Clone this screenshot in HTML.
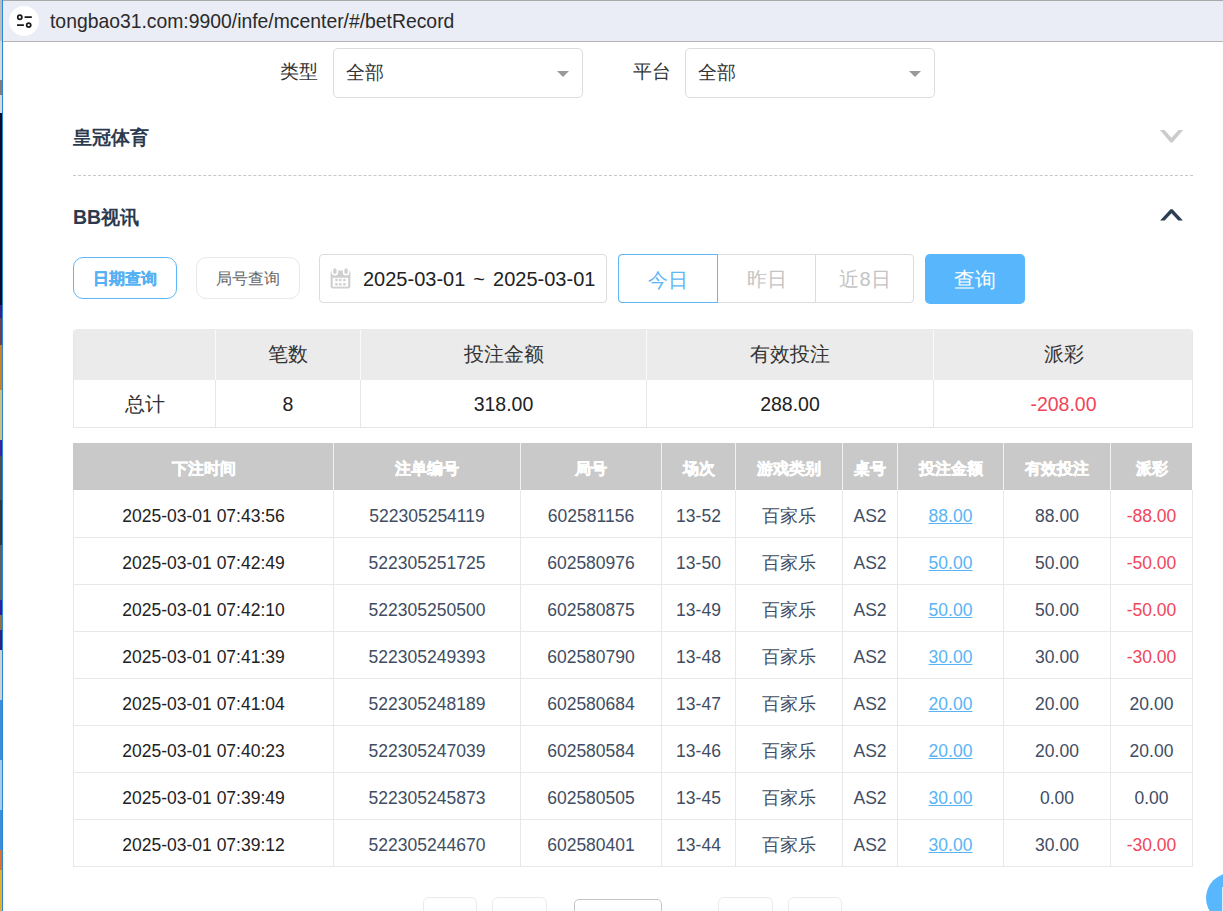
<!DOCTYPE html>
<html><head><meta charset="utf-8">
<style>
*{margin:0;padding:0;box-sizing:border-box}
html,body{width:1223px;height:911px;overflow:hidden;background:#fff}
body{position:relative;font-family:"Liberation Sans",sans-serif;color:#333}
.a{position:absolute}
.c{text-align:center}
/* left edge strip */
#strip{left:0;top:0;width:2px;height:911px;background:linear-gradient(#bdbdbd 0px,#bdbdbd 41px,#d9d9d9 41px,#d9d9d9 80px,#8a7a70 80px,#8a7a70 95px,#d9d9d9 95px,#d9d9d9 113px,#0d0d2a 113px,#0d0d2a 305px,#3a2080 305px,#3a2080 318px,#6a4050 318px,#6a4050 345px,#cf8025 345px,#cf8025 390px,#cfc07f 390px,#cfc07f 440px,#4020a0 440px,#4020a0 456px,#505050 456px,#505050 500px,#353535 500px,#353535 545px,#606060 545px,#606060 600px,#3020a0 600px,#3020a0 615px,#907040 615px,#907040 630px,#302080 630px,#302080 650px,#d0d0d0 650px,#d0d0d0 700px,#3a90d8 700px,#3a90d8 760px,#a8cce8 760px,#a8cce8 810px,#3a90d8 810px,#3a90d8 850px,#e07030 850px,#e07030 870px,#e8b030 870px,#e8b030 911px)}
#blueline{left:2px;top:0;width:1px;height:911px;background:#2b86d6}
/* address bar */
#bar{left:3px;top:0;width:1220px;height:42px;background:#eaedf6;border-top:1px solid #a9a9a9;border-bottom:1px solid #b4b4b4}
#tune{left:9px;top:6px;width:30px;height:30px;border-radius:50%;background:#fff}
#url{left:50px;top:9px;height:24px;line-height:24px;font-size:19.35px;color:#2a2a2a;white-space:nowrap}
.lbl{font-size:19px;color:#333;white-space:nowrap}
.sel{height:50px;width:250px;border:1px solid #dcdcdc;border-radius:5px;background:#fff}
.sel span{position:absolute;left:12px;top:0;line-height:48px;font-size:19px;color:#333}
.sel i{position:absolute;left:223px;top:22px;width:0;height:0;border-left:6px solid transparent;border-right:6px solid transparent;border-top:6px solid #999}
.ttl{font-size:19px;font-weight:bold;color:#2c3a4e;white-space:nowrap}
#dash{left:73px;top:175px;width:1120px;height:1px;border-top:1px dashed #c8c8c8}
.btn{height:42px;border-radius:10px;font-size:16px;text-align:center;line-height:42px}
#b1{left:73px;top:257px;width:104px;border:1px solid #5db6f6;color:#55b0f4;font-weight:bold;-webkit-text-stroke:0.3px #55b0f4}
#b2{left:196px;top:257px;width:104px;border:1px solid #e8e8e8;color:#666}
#date{left:319px;top:254px;width:288px;height:49px;border:1px solid #dcdcdc;border-radius:4px}
#date span{position:absolute;left:43px;top:1px;line-height:47px;font-size:20px;color:#222;white-space:nowrap}
#seg{left:618px;top:254px;width:296px;height:49px;border:1px solid #dcdcdc;border-radius:4px}
.sg{top:-1px;height:49px;line-height:50px;font-size:20px;text-align:center;color:#c4c4c4}
#s1{left:-1px;width:100px;border:1px solid #5db6f6;border-radius:4px 0 0 4px;color:#5db6f6}
#s2{left:99px;width:98px;border-right:1px solid #dcdcdc}
#s3{left:197px;width:98px}
#q{left:925px;top:254px;width:100px;height:50px;border-radius:5px;background:#58b7fc;color:#fff;font-size:20.5px;line-height:51px;text-align:center}
/* summary */
#sum{left:73px;top:329px;width:1120px;height:99px;border:1px solid #e6e6e6;border-top:none;border-radius:4px 4px 0 0;overflow:hidden}
#sumh{left:-1px;top:0;width:1120px;height:51px;background:#ebebeb}
.sv{position:absolute;top:0;width:1px;height:98px;background:#e6e6e6}
.hv{position:absolute;top:1px;width:1px;height:50px;background:#fafafa}
.st{position:absolute;text-align:center;font-size:19.5px;color:#333;white-space:nowrap}
/* detail */
#dt{left:73px;top:443px;width:1120px;height:424px}
#dth{left:0;top:0;width:1119px;height:47px;background:#c9c9c9}
.dv{position:absolute;width:1px;background:#e8e8e8}
.dhv{position:absolute;top:0;width:1px;height:47px;background:#f2f2f2}
.dh{position:absolute;top:0;height:47px;line-height:51px;text-align:center;color:#fff;font-weight:bold;font-size:16px;white-space:nowrap;-webkit-text-stroke:0.5px #fff}
.row{position:absolute;left:0;width:1120px;height:47px}
.cell{position:absolute;top:0;height:47px;line-height:52px;text-align:center;font-size:17.5px;color:#414d63;white-space:nowrap}
.rd{color:#f0465a}
.lk{color:#5ab4f4;text-decoration:underline}
.blk{color:#222}
.pg{height:30px;border:1px solid #ebebeb;border-radius:6px;background:#fff}
#fab{left:1206px;top:873px;width:50px;height:50px;border-radius:50%;background:#58b7fe}
</style></head><body>
<div class="a" id="strip"></div>
<div class="a" id="blueline"></div>
<div class="a" id="bar"></div>
<div class="a" id="tune"><svg width="30" height="30" viewBox="0 0 30 30"><g fill="none" stroke="#1a1a1a" stroke-width="1.75"><circle cx="10.8" cy="11.2" r="2.05"/><circle cx="19.7" cy="19.1" r="2.05"/><path d="M15.6 11.1H22.8M8 19.1H14.9" stroke-width="1.9"/></g></svg></div>
<div class="a" id="url">tongbao31.com:9900/infe/mcenter/#/betRecord</div>

<div class="a lbl" style="left:280px;top:60px;line-height:24px">类型</div>
<div class="a sel" style="left:333px;top:48px"><span>全部</span><i></i></div>
<div class="a lbl" style="left:633px;top:60px;line-height:24px">平台</div>
<div class="a sel" style="left:685px;top:48px"><span>全部</span><i></i></div>

<div class="a ttl" style="left:73px;top:126px;line-height:24px">皇冠体育</div>

<div class="a" id="dash"></div>
<div class="a ttl" style="left:73px;top:205px;line-height:24px"><span style="font-size:19.5px">BB</span>视讯</div>
<svg class="a" style="left:1155px;top:120px" width="33" height="110" viewBox="0 0 33 110"><path d="M5.0 10.1 L9.4 10.1 L16.5 17.8 L23.5 10.1 L28.1 10.1 L17.5 22.6 L15.5 22.6Z" fill="#cbcbcb"/><path d="M5.1 100.5 L9.6 100.5 L16.5 93.3 L23.3 100.5 L27.9 100.5 L17.5 89.3 L15.5 89.3Z" fill="#2d3d52"/></svg>

<div class="a btn" id="b1">日期查询</div>
<div class="a btn" id="b2">局号查询</div>
<div class="a" id="date"><svg class="a" style="left:10px;top:13px" width="22" height="22" viewBox="0 0 22 22"><rect x="0.6" y="2.6" width="19.8" height="17.8" rx="2.2" fill="#cfcfcf"/><rect x="2.7" y="9.8" width="15.5" height="8.9" fill="#fff"/><g fill="#cfcfcf"><rect x="5.3" y="10.8" width="2.4" height="2.4"/><rect x="9.1" y="10.8" width="2.4" height="2.4"/><rect x="13.2" y="10.8" width="2.4" height="2.4"/><rect x="5.3" y="15.1" width="2.4" height="2.4"/><rect x="9.1" y="15.1" width="2.4" height="2.4"/><rect x="13.2" y="15.1" width="2.4" height="2.4"/></g><rect x="1.6" y="-2" width="6.6" height="9.6" rx="3.3" fill="#fff"/><rect x="12.8" y="-2" width="6.6" height="9.6" rx="3.3" fill="#fff"/><rect x="3.25" y="0.3" width="3.3" height="5.6" rx="1.65" fill="#cfcfcf"/><rect x="14.45" y="0.3" width="3.3" height="5.6" rx="1.65" fill="#cfcfcf"/></svg><span style="word-spacing:2.5px">2025-03-01 ~ 2025-03-01</span></div>
<div class="a" id="seg"><div class="a sg" id="s1">今日</div><div class="a sg" id="s2">昨日</div><div class="a sg" id="s3">近8日</div></div>
<div class="a" id="q">查询</div>

<div class="a" id="sum">
  <div class="a" id="sumh"></div>
  <div class="hv" style="left:141px"></div><div class="hv" style="left:286px"></div><div class="hv" style="left:572px"></div><div class="hv" style="left:859px"></div>
  <div class="sv" style="left:141px;top:51px;height:47px"></div><div class="sv" style="left:286px;top:51px;height:47px"></div><div class="sv" style="left:572px;top:51px;height:47px"></div><div class="sv" style="left:859px;top:51px;height:47px"></div>
  <div class="st" style="left:142px;width:144px;top:13px;line-height:24px">笔数</div>
  <div class="st" style="left:287px;width:285px;top:13px;line-height:24px">投注金额</div>
  <div class="st" style="left:573px;width:286px;top:13px;line-height:24px">有效投注</div>
  <div class="st" style="left:860px;width:259px;top:13px;line-height:24px">派彩</div>
  <div class="st" style="left:0;width:141px;top:63px;line-height:24px">总计</div>
  <div class="st blk" style="left:142px;width:144px;top:63px;line-height:24px">8</div>
  <div class="st blk" style="left:287px;width:285px;top:63px;line-height:24px">318.00</div>
  <div class="st blk" style="left:573px;width:286px;top:63px;line-height:24px">288.00</div>
  <div class="st rd" style="left:860px;width:259px;top:63px;line-height:24px">-208.00</div>
</div>

<div class="a" id="dt">
  <div class="a" id="dth"></div>
  <div id="dhead"><div class="dh" style="left:1px;width:259px">下注时间</div><div class="dh" style="left:261px;width:186px">注单编号</div><div class="dh" style="left:448px;width:140px">局号</div><div class="dh" style="left:589px;width:73px">场次</div><div class="dh" style="left:663px;width:106px">游戏类别</div><div class="dh" style="left:770px;width:54px">桌号</div><div class="dh" style="left:825px;width:105px">投注金额</div><div class="dh" style="left:931px;width:106px">有效投注</div><div class="dh" style="left:1038px;width:81px">派彩</div><div class="dhv" style="left:260px"></div><div class="dhv" style="left:447px"></div><div class="dhv" style="left:588px"></div><div class="dhv" style="left:662px"></div><div class="dhv" style="left:769px"></div><div class="dhv" style="left:824px"></div><div class="dhv" style="left:930px"></div><div class="dhv" style="left:1037px"></div></div>
  <div id="drows"><div class="dv" style="left:0px;top:47px;height:377px"></div>
<div class="dv" style="left:260px;top:47px;height:377px"></div>
<div class="dv" style="left:447px;top:47px;height:377px"></div>
<div class="dv" style="left:588px;top:47px;height:377px"></div>
<div class="dv" style="left:662px;top:47px;height:377px"></div>
<div class="dv" style="left:769px;top:47px;height:377px"></div>
<div class="dv" style="left:824px;top:47px;height:377px"></div>
<div class="dv" style="left:930px;top:47px;height:377px"></div>
<div class="dv" style="left:1037px;top:47px;height:377px"></div>
<div class="dv" style="left:1119px;top:47px;height:377px"></div>
<div class="dv" style="left:0;top:94px;width:1120px;height:1px"></div>
<div class="dv" style="left:0;top:141px;width:1120px;height:1px"></div>
<div class="dv" style="left:0;top:188px;width:1120px;height:1px"></div>
<div class="dv" style="left:0;top:235px;width:1120px;height:1px"></div>
<div class="dv" style="left:0;top:282px;width:1120px;height:1px"></div>
<div class="dv" style="left:0;top:329px;width:1120px;height:1px"></div>
<div class="dv" style="left:0;top:376px;width:1120px;height:1px"></div>
<div class="dv" style="left:0;top:423px;width:1120px;height:1px"></div>
<div class="row" style="top:47px"><div class="cell blk" style="left:1px;width:259px">2025-03-01 07:43:56</div><div class="cell" style="left:261px;width:186px">522305254119</div><div class="cell" style="left:448px;width:140px">602581156</div><div class="cell" style="left:589px;width:73px">13-52</div><div class="cell" style="left:663px;width:106px">百家乐</div><div class="cell" style="left:770px;width:54px">AS2</div><div class="cell lk" style="left:825px;width:105px">88.00</div><div class="cell" style="left:931px;width:106px">88.00</div><div class="cell rd" style="left:1038px;width:81px">-88.00</div></div>
<div class="row" style="top:94px"><div class="cell blk" style="left:1px;width:259px">2025-03-01 07:42:49</div><div class="cell" style="left:261px;width:186px">522305251725</div><div class="cell" style="left:448px;width:140px">602580976</div><div class="cell" style="left:589px;width:73px">13-50</div><div class="cell" style="left:663px;width:106px">百家乐</div><div class="cell" style="left:770px;width:54px">AS2</div><div class="cell lk" style="left:825px;width:105px">50.00</div><div class="cell" style="left:931px;width:106px">50.00</div><div class="cell rd" style="left:1038px;width:81px">-50.00</div></div>
<div class="row" style="top:141px"><div class="cell blk" style="left:1px;width:259px">2025-03-01 07:42:10</div><div class="cell" style="left:261px;width:186px">522305250500</div><div class="cell" style="left:448px;width:140px">602580875</div><div class="cell" style="left:589px;width:73px">13-49</div><div class="cell" style="left:663px;width:106px">百家乐</div><div class="cell" style="left:770px;width:54px">AS2</div><div class="cell lk" style="left:825px;width:105px">50.00</div><div class="cell" style="left:931px;width:106px">50.00</div><div class="cell rd" style="left:1038px;width:81px">-50.00</div></div>
<div class="row" style="top:188px"><div class="cell blk" style="left:1px;width:259px">2025-03-01 07:41:39</div><div class="cell" style="left:261px;width:186px">522305249393</div><div class="cell" style="left:448px;width:140px">602580790</div><div class="cell" style="left:589px;width:73px">13-48</div><div class="cell" style="left:663px;width:106px">百家乐</div><div class="cell" style="left:770px;width:54px">AS2</div><div class="cell lk" style="left:825px;width:105px">30.00</div><div class="cell" style="left:931px;width:106px">30.00</div><div class="cell rd" style="left:1038px;width:81px">-30.00</div></div>
<div class="row" style="top:235px"><div class="cell blk" style="left:1px;width:259px">2025-03-01 07:41:04</div><div class="cell" style="left:261px;width:186px">522305248189</div><div class="cell" style="left:448px;width:140px">602580684</div><div class="cell" style="left:589px;width:73px">13-47</div><div class="cell" style="left:663px;width:106px">百家乐</div><div class="cell" style="left:770px;width:54px">AS2</div><div class="cell lk" style="left:825px;width:105px">20.00</div><div class="cell" style="left:931px;width:106px">20.00</div><div class="cell" style="left:1038px;width:81px">20.00</div></div>
<div class="row" style="top:282px"><div class="cell blk" style="left:1px;width:259px">2025-03-01 07:40:23</div><div class="cell" style="left:261px;width:186px">522305247039</div><div class="cell" style="left:448px;width:140px">602580584</div><div class="cell" style="left:589px;width:73px">13-46</div><div class="cell" style="left:663px;width:106px">百家乐</div><div class="cell" style="left:770px;width:54px">AS2</div><div class="cell lk" style="left:825px;width:105px">20.00</div><div class="cell" style="left:931px;width:106px">20.00</div><div class="cell" style="left:1038px;width:81px">20.00</div></div>
<div class="row" style="top:329px"><div class="cell blk" style="left:1px;width:259px">2025-03-01 07:39:49</div><div class="cell" style="left:261px;width:186px">522305245873</div><div class="cell" style="left:448px;width:140px">602580505</div><div class="cell" style="left:589px;width:73px">13-45</div><div class="cell" style="left:663px;width:106px">百家乐</div><div class="cell" style="left:770px;width:54px">AS2</div><div class="cell lk" style="left:825px;width:105px">30.00</div><div class="cell" style="left:931px;width:106px">0.00</div><div class="cell" style="left:1038px;width:81px">0.00</div></div>
<div class="row" style="top:376px"><div class="cell blk" style="left:1px;width:259px">2025-03-01 07:39:12</div><div class="cell" style="left:261px;width:186px">522305244670</div><div class="cell" style="left:448px;width:140px">602580401</div><div class="cell" style="left:589px;width:73px">13-44</div><div class="cell" style="left:663px;width:106px">百家乐</div><div class="cell" style="left:770px;width:54px">AS2</div><div class="cell lk" style="left:825px;width:105px">30.00</div><div class="cell" style="left:931px;width:106px">30.00</div><div class="cell rd" style="left:1038px;width:81px">-30.00</div></div></div>
</div>

<div class="a pg" style="left:423px;top:897px;width:54px"></div>
<div class="a pg" style="left:492px;top:897px;width:55px"></div>
<div class="a pg" style="left:574px;top:899px;width:88px;border:1px solid #c4c4c4;border-radius:5px"></div>
<div class="a pg" style="left:718px;top:897px;width:55px"></div>
<div class="a pg" style="left:788px;top:897px;width:54px"></div>
<div class="a" id="fab"></div><div class="a" style="left:1222px;top:887px;width:1px;height:24px;background:#d8ecfb"></div>
</body></html>
